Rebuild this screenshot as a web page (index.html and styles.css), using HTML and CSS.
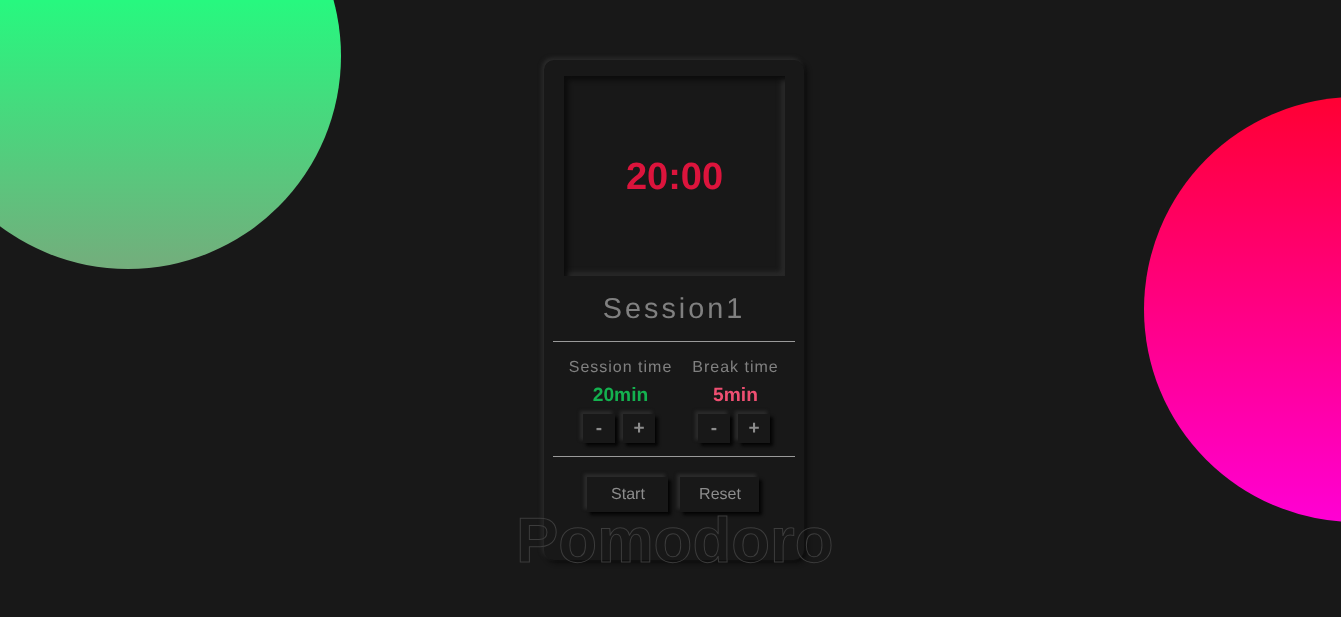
FILE: index.html
```html
<!DOCTYPE html>
<html lang="en">
<head>
<meta charset="utf-8">
<title>Pomodoro</title>
<link rel="stylesheet" href="styles.css">
</head>
<body>
<div class="circle circle-green"></div>
<div class="circle circle-pink"></div>
<main class="card">
  <div class="timer"><span class="clock">20:00</span></div>
  <h2 class="session-name">Session1</h2>
  <hr class="rule">
  <section class="settings">
    <div class="setting setting-session">
      <div class="setting-label">Session time</div>
      <div class="setting-value value-green">20min</div>
      <div class="steppers">
        <button class="step">-</button>
        <button class="step">+</button>
      </div>
    </div>
    <div class="setting setting-break">
      <div class="setting-label">Break time</div>
      <div class="setting-value value-pink">5min</div>
      <div class="steppers">
        <button class="step">-</button>
        <button class="step">+</button>
      </div>
    </div>
  </section>
  <hr class="rule">
  <div class="actions">
    <button class="action">Start</button>
    <button class="action action-reset">Reset</button>
  </div>
</main>
<h1 class="brand">Pomodoro</h1>
</body>
</html>
```
FILE: styles.css
```css
* { box-sizing: border-box; }
html, body { height: 100%; }
body {
  margin: 0;
  background: #181818;
  font-family: "Liberation Sans", Arial, sans-serif;
  text-rendering: geometricPrecision;
  overflow: hidden;
  position: relative;
  display: flex;
  justify-content: flex-start;
  align-items: flex-start;
  padding: 60px 0 0 544px;
}
.circle {
  position: absolute;
  border-radius: 50%;
}
.circle-green {
  left: -85px;
  top: -157px;
  width: 426px;
  height: 426px;
  background: linear-gradient(180deg, #27f87f 37%, #74ad7c 100%);
}
.circle-pink {
  left: 1144px;
  top: 97px;
  width: 425px;
  height: 425px;
  background: linear-gradient(#ff0033, #ff00d4);
}
.card {
  position: relative;
  width: 260px;
  height: 500px;
  border-radius: 10px;
  background: #181818;
  box-shadow: -2px -2px 4px #2c2c2c, 3px 3px 5px #0c0c0c;
  padding: 16px 9px 0;
  display: flex;
  flex-direction: column;
  align-items: stretch;
  will-change: transform;
}
.timer {
  width: 221px;
  height: 200px;
  margin-left: 11px;
  padding-top: 2px;
  background: #181818;
  box-shadow: inset 4px 4px 5px #0c0c0c, inset -4px -4px 5px #2a2a2a;
  display: flex;
  align-items: center;
  justify-content: center;
}
.clock {
  color: #dc143c;
  font-size: 38px;
  font-weight: 700;
}
.session-name {
  margin: 17px 0 16px;
  text-align: center;
  color: #808080;
  font-size: 28.8px;
  font-weight: 400;
  letter-spacing: 3px;
  line-height: 32px;
}
.rule {
  width: 242px;
  height: 1px;
  margin: 0;
  border: 0;
  background: #9a9a9a;
}
.settings {
  display: flex;
  justify-content: flex-start;
  padding-top: 17px;
  height: 114px;
}
.setting {
  display: flex;
  flex-direction: column;
  align-items: center;
}
.setting-session { width: 135px; }
.setting-break { width: 95px; }
.setting-label {
  color: #808080;
  font-size: 16px;
  letter-spacing: 1px;
  line-height: 18px;
}
.setting-value {
  margin-top: 8px;
  font-size: 19.2px;
  font-weight: 700;
  line-height: 21px;
}
.value-green { color: #14b14f; }
.value-pink { color: #ef4f72; }
.steppers {
  display: flex;
  gap: 8px;
  margin-top: 8px;
  margin-right: 3px;
}
.step {
  width: 32px;
  height: 29px;
  padding: 0;
  border: 0;
  background: #181818;
  color: #8c8c8c;
  font-family: inherit;
  text-rendering: inherit;
  font-size: 19px;
  font-weight: 700;
  box-shadow: -3px -3px 3px #2a2a2a, 3px 3px 3px #050505;
}
.actions {
  display: flex;
  justify-content: flex-start;
  gap: 12px;
  margin: 20px 0 0 34px;
}
.action {
  width: 81px;
  height: 35px;
  padding: 1px 0 0 1px;
  border: 0;
  background: #181818;
  color: #8c8c8c;
  font-family: inherit;
  text-rendering: inherit;
  font-size: 16px;
  box-shadow: -3px -3px 3px #2a2a2a, 3px 3px 3px #050505;
}
.action-reset { width: 79px; }
.brand {
  position: absolute;
  left: 516px;
  top: 504px;
  margin: 0;
  color: transparent;
  -webkit-text-stroke: 1px #3c3c3c;
  font-size: 63.5px;
  font-weight: 700;
  line-height: 75px;
}
```
